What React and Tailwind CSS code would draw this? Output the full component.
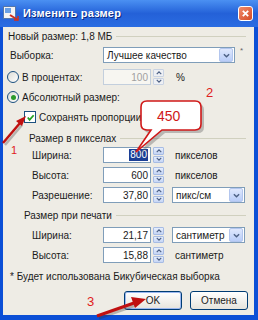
import React from 'react';

const font = { fontFamily: '"Liberation Sans", Arial, sans-serif' };

function Chevron({ up = false, className = '' }) {
  return (
    <svg viewBox="0 0 8 5" className={className}>
      <path
        d={up ? 'M1 4 L4 1 L7 4' : 'M1 1 L4 4 L7 1'}
        fill="none"
        stroke="#4d6185"
        strokeWidth="1.6"
      />
    </svg>
  );
}

function Spin({ disabled = false }) {
  const btn = disabled
    ? 'bg-[#eef0f4] border-[#c9d3e3]'
    : 'bg-gradient-to-b from-[#e6eefc] to-[#c5d5f5] border-[#a7bce4]';
  return (
    <div className="flex flex-col w-[11px] h-full gap-px ml-[2px]">
      <div className={`flex-1 flex items-center justify-center border rounded-[1px] ${btn}`}>
        <Chevron up className="w-[6px] h-[4px]" />
      </div>
      <div className={`flex-1 flex items-center justify-center border rounded-[1px] ${btn}`}>
        <Chevron className="w-[6px] h-[4px]" />
      </div>
    </div>
  );
}

function NumField({ value, selected = false, disabled = false }) {
  return (
    <div className="flex h-[16px]">
      <div
        className={`w-[48px] h-full border flex items-center justify-end pr-[2px] ${
          disabled ? 'bg-[#f7f6f1] border-[#c3cfdd] text-[#a0a0a0]' : 'bg-white border-[#7f9db9]'
        }`}
      >
        <span className={selected ? 'bg-[#1c3f95] text-white px-px leading-[12px]' : ''}>{value}</span>
      </div>
      <Spin disabled={disabled} />
    </div>
  );
}

function Select({ value, width }) {
  return (
    <div className={`${width} h-[16px] border border-[#7f9db9] bg-white flex items-center`}>
      <span className="flex-1 pl-[3px] truncate">{value}</span>
      <div className="w-[14px] h-[14px] mr-px bg-gradient-to-b from-[#dfe8fd] to-[#b9cdf8] border border-[#b3c6ee] rounded-[2px] flex items-center justify-center">
        <Chevron className="w-[7px] h-[5px]" />
      </div>
    </div>
  );
}

function Radio({ checked = false }) {
  return (
    <div className="w-[12px] h-[12px] rounded-full border border-[#1c5180] bg-gradient-to-br from-[#dcdcd6] to-white flex items-center justify-center">
      {checked && <div className="w-[5px] h-[5px] rounded-full bg-[#2b9a2b]" />}
    </div>
  );
}

function Checkbox() {
  return (
    <div className="w-[12px] h-[12px] border border-[#1c5180] bg-white flex items-center justify-center">
      <svg viewBox="0 0 10 10" className="w-[9px] h-[9px]">
        <path d="M2 5 L4 7.5 L8.5 2.5" fill="none" stroke="#21a121" strokeWidth="2" />
      </svg>
    </div>
  );
}

function GroupLabel({ text, pad }) {
  return (
    <div className={`flex items-center h-[14px] ${pad} pr-[8px]`}>
      <span>{text}</span>
      <div className="flex-1 h-px bg-[#d0d0bf] ml-[4px]" />
    </div>
  );
}

function FieldRow({ label, children }) {
  return (
    <div className="flex items-center h-[16px]">
      <div className="w-[100px] pl-[29px]">{label}</div>
      {children}
    </div>
  );
}

export default function App() {
  return (
    <div
      className="relative w-[258px] h-[320px] bg-[#0b4fd6] flex flex-col overflow-hidden text-[10px] text-[#1a1a1a]"
      style={font}
    >
      {/* title bar */}
      <div className="h-[27px] flex items-center bg-gradient-to-b from-[#4b90f2] via-[#2461d8] to-[#2a6ce2] pl-[3px] pr-[5px]">
        <svg viewBox="0 0 16 15" className="w-[16px] h-[15px]">
          <rect x="0.5" y="0.5" width="12" height="12" fill="#f4f4f4" stroke="#5577aa" />
          <rect x="2" y="2" width="6" height="5" fill="#6aa0e6" />
          <path d="M7 9 L15 14" stroke="#d03020" strokeWidth="2" />
          <path d="M11 14 L15 14 L15 10" fill="none" stroke="#d03020" strokeWidth="1.5" />
        </svg>
        <span className="ml-[4px] text-white font-bold text-[11px] tracking-[0.2px] [text-shadow:1px_1px_0_#0a2a80]">
          Изменить размер
        </span>
        <div className="ml-auto w-[15px] h-[15px] rounded-[3px] border border-white bg-gradient-to-br from-[#f08a6a] to-[#d44a22] flex items-center justify-center">
          <svg viewBox="0 0 10 10" className="w-[9px] h-[9px]">
            <path d="M2 2 L8 8 M8 2 L2 8" stroke="white" strokeWidth="2" />
          </svg>
        </div>
      </div>

      {/* body */}
      <div className="flex-1 mx-[3px] ml-[3px] mr-[4px] mb-[5px] bg-[#eeece5] flex flex-col pt-[2px]">
        <div className="flex items-center h-[14px] pl-[5px] pr-[8px]">
          <span>Новый размер: 1,8 МБ</span>
          <div className="flex-1 h-px bg-[#d0d0bf] ml-[4px]" />
        </div>

        <div className="flex h-[16px] mt-[4px]">
          <div className="w-[100px] pl-[7px] flex items-center">Выборка:</div>
          <Select value="Лучшее качество" width="w-[132px]" />
          <span className="ml-[5px] text-[8px] leading-[8px] text-[#666]">*</span>
        </div>

        <div className="flex items-center h-[14px] mt-[7px]">
          <div className="w-[100px] pl-[4px] flex items-center">
            <Radio />
            <span className="ml-[3px]">В процентах:</span>
          </div>
          <NumField value="100" disabled />
          <span className="ml-[12px]">%</span>
        </div>

        <div className="flex items-center h-[14px] mt-[6px] pl-[4px]">
          <Radio checked />
          <span className="ml-[3px]">Абсолютный размер:</span>
        </div>

        <div className="flex items-center h-[14px] mt-[6px] pl-[21px]">
          <Checkbox />
          <span className="ml-[3px]">Сохранять пропорции</span>
        </div>

        <div className="mt-[7px]">
          <GroupLabel text="Размер в пикселах" pad="pl-[26px]" />
        </div>

        <div className="mt-[2px]">
          <FieldRow label="Ширина:">
            <NumField value="800" selected />
            <span className="ml-[11px]">пикселов</span>
          </FieldRow>
        </div>
        <div className="mt-[4px]">
          <FieldRow label="Высота:">
            <NumField value="600" />
            <span className="ml-[11px]">пикселов</span>
          </FieldRow>
        </div>
        <div className="mt-[4px]">
          <FieldRow label="Разрешение:">
            <NumField value="37,80" />
            <div className="ml-[8px]">
              <Select value="пикс/см" width="w-[73px]" />
            </div>
          </FieldRow>
        </div>

        <div className="mt-[5px]">
          <GroupLabel text="Размер при печати" pad="pl-[21px]" />
        </div>

        <div className="mt-[5px]">
          <FieldRow label="Ширина:">
            <NumField value="21,17" />
            <div className="ml-[8px]">
              <Select value="сантиметр" width="w-[73px]" />
            </div>
          </FieldRow>
        </div>
        <div className="mt-[4px]">
          <FieldRow label="Высота:">
            <NumField value="15,88" />
            <span className="ml-[11px]">сантиметр</span>
          </FieldRow>
        </div>

        <div className="flex items-center h-[14px] mt-[6px] pl-[7px]">
          * Будет использована Бикубическая выборка
        </div>

        <div className="flex justify-end gap-[8px] pr-[6px] mt-[8px]">
          <button className="w-[58px] h-[19px] rounded-[3px] border border-[#003c74] bg-gradient-to-b from-white to-[#e6e4dc] shadow-[inset_0_0_0_1px_#9cb8f0]">
            OK
          </button>
          <button className="w-[58px] h-[19px] rounded-[3px] border border-[#003c74] bg-gradient-to-b from-white to-[#e6e4dc]">
            Отмена
          </button>
        </div>
      </div>

      {/* annotations */}
      <svg className="absolute inset-0 pointer-events-none" width="258" height="320" viewBox="0 0 258 320">
        <path
          d="M147,101 H195 Q201,101 201,107 V124 Q201,130 195,130 H162 L136,152 L151,130 H147 Q141,130 141,124 V107 Q141,101 147,101 Z"
          fill="#555"
          opacity="0.35"
          transform="translate(3,3)"
        />
        <path
          d="M147,101 H195 Q201,101 201,107 V124 Q201,130 195,130 H162 L136,152 L151,130 H147 Q141,130 141,124 V107 Q141,101 147,101 Z"
          fill="white"
          stroke="#d01818"
          strokeWidth="1.6"
        />
        <g opacity="0.3" transform="translate(2,2)">
          <path d="M3,143 L20,123" stroke="#333" strokeWidth="2.5" />
          <path d="M97,316 L134,303" stroke="#333" strokeWidth="3" />
        </g>
        <path d="M3,143 L20,123" stroke="#c01010" strokeWidth="2.5" />
        <path d="M26,116 L16,121 L22,126 Z" fill="#c01010" />
        <path d="M97,316 L134,303" stroke="#c01010" strokeWidth="3" />
        <path d="M146,299 L131,297 L135,308 Z" fill="#c01010" />
      </svg>
      <div className="absolute left-[157px] top-[108px] text-[14px] leading-[16px] text-[#d01818]" style={font}>
        450
      </div>
      <div className="absolute left-[206px] top-[86px] text-[13px] leading-[14px] text-[#e02020]" style={font}>
        2
      </div>
      <div className="absolute left-[11px] top-[144px] text-[11px] leading-[12px] text-[#e02020]" style={font}>
        1
      </div>
      <div className="absolute left-[87px] top-[295px] text-[13px] leading-[14px] text-[#e02020]" style={font}>
        3
      </div>
    </div>
  );
}
